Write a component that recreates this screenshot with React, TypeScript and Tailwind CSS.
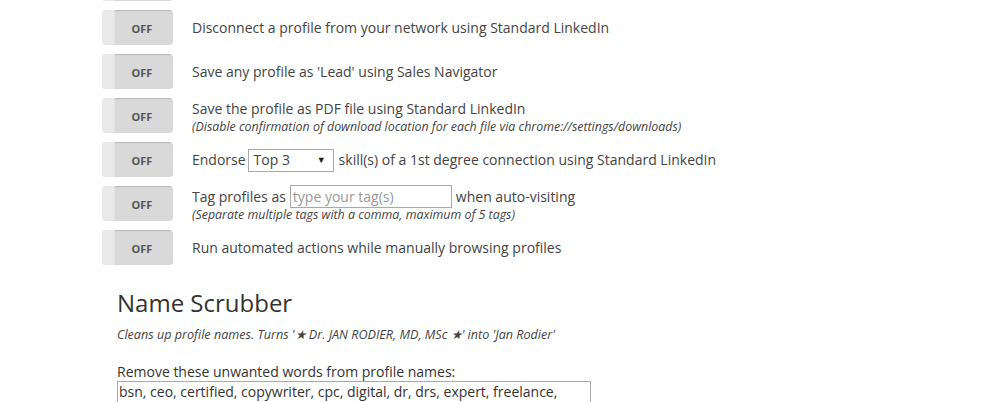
import React from 'react';

interface IToggleRowProps {
  children?: React.ReactNode;
  note?: string;
  stub?: boolean;
}

const OffToggle: React.FC<{ stub?: boolean }> = ({ stub }) => (
  <div className="flex h-[35px] w-[71px] shrink-0 overflow-hidden rounded-[4px] bg-[#d9d9d9]">
    <div className="h-full w-[13px] border-r border-dotted border-[#d6d6d6] bg-[#e9e9e9]" />
    <div className="flex flex-1 items-center justify-center pr-[4px] pt-[3px] text-[11px] font-bold text-[#555] shadow-[inset_0_2px_1px_-1px_rgba(0,0,0,0.16)]">
      {stub ? '' : 'OFF'}
    </div>
  </div>
);

const ToggleRow: React.FC<IToggleRowProps> = ({ children, note, stub }) => (
  <div className="flex h-[35px] min-h-0 shrink-0 items-center gap-[19px]">
    <OffToggle stub={stub} />
    <div className="flex flex-col pt-[1px]">
      <div className="flex items-center text-[14px] leading-[20px] text-[#444]">{children}</div>
      {note && <div className="text-[12.4px] italic leading-[15px] text-[#444]">{note}</div>}
    </div>
  </div>
);

export default function App() {
  return (
    <div
      className="h-[402px] w-[988px] overflow-hidden bg-white"
      style={{ fontFamily: '"Open Sans", sans-serif' }}
    >
      <div className="-mt-[34px] flex flex-col gap-[9px] pl-[102px]">
        <ToggleRow stub />
        <ToggleRow>Disconnect a profile from your network using Standard LinkedIn</ToggleRow>
        <ToggleRow>Save any profile as 'Lead' using Sales Navigator</ToggleRow>
        <ToggleRow note="(Disable confirmation of download location for each file via chrome://settings/downloads)">
          Save the profile as PDF file using Standard LinkedIn
        </ToggleRow>
        <ToggleRow>
          Endorse
          <div className="-my-[2px] ml-[2px] mr-[5px] flex h-[23px] w-[86px] items-center justify-between border border-[#a9a9a9] bg-white pl-[5px] pr-[7px]">
            <span>Top 3</span>
            <span className="text-[9px] text-[#222]">▼</span>
          </div>
          skill(s) of a 1st degree connection using Standard LinkedIn
        </ToggleRow>
        <ToggleRow note="(Separate multiple tags with a comma, maximum of 5 tags)">
          Tag profiles as
          <div className="-my-[2px] ml-[4px] mr-[4px] flex h-[23px] w-[162px] items-center border border-[#a9a9a9] bg-white pl-[2px] text-[#999]">
            type your tag(s)
          </div>
          when auto-visiting
        </ToggleRow>
        <ToggleRow>Run automated actions while manually browsing profiles</ToggleRow>
      </div>

      <div className="pl-[117px] pt-[23px] text-[#333]">
        <h2 className="text-[24px] leading-[30px]">Name Scrubber</h2>
        <p className="mt-[9px] text-[12.6px] italic leading-[16px] text-[#444]">
          Cleans up profile names. Turns '★ Dr. JAN RODIER, MD, MSc ★' into 'Jan Rodier'
        </p>
        <p className="mt-[20px] text-[14px] leading-[18px] text-[#333]">
          Remove these unwanted words from profile names:
        </p>
        <div className="h-[40px] w-[474px] border border-[#a9a9a9] px-[1px] text-[14px] leading-[20px] text-[#333]">
          bsn, ceo, certified, copywriter, cpc, digital, dr, drs, expert, freelance,
        </div>
      </div>
    </div>
  );
}
